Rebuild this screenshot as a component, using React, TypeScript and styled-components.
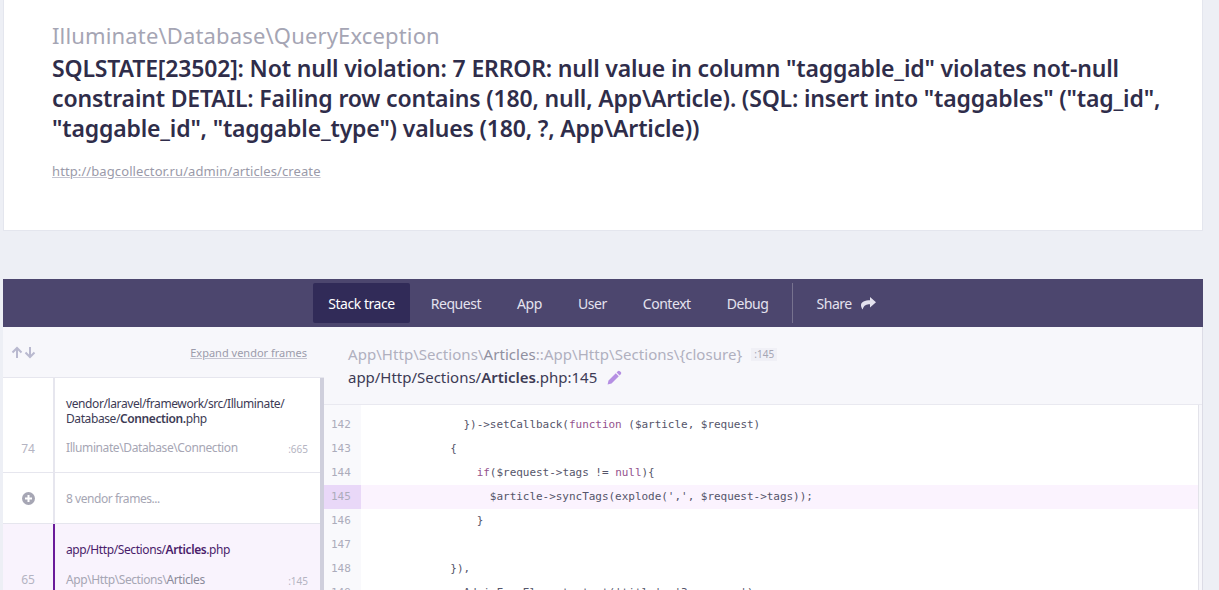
import React from "react";
import styled, { createGlobalStyle } from "styled-components";

const GlobalStyle = createGlobalStyle`
  html, body {
    margin: 0;
    height: 590px;
    overflow: hidden;
    background: #edeff5;
    font-family: "Noto Sans", "Open Sans", sans-serif;
  }
`;

const Page = styled.div`
  display: flex;
  flex-direction: column;
  gap: 48px;
  width: 1200px;
  margin-left: 3px;
`;

const ErrorCard = styled.section`
  height: 231px;
  box-sizing: border-box;
  background: #fff;
  border: 1px solid #e4e6ee;
  border-top: 0;
  padding: 21px 36px 0 48px;
`;

const ExceptionClass = styled.div`
  font-size: 22px;
  line-height: 28px;
  color: #a5a5b4;
  letter-spacing: 0.15px;
`;

const ExceptionMessage = styled.h1`
  margin: 4px 0 0;
  font-size: 23px;
  line-height: 30px;
  font-weight: 600;
  color: #2f2d4a;
  letter-spacing: -0.17px;
`;

const RequestUrl = styled.a`
  display: inline-block;
  margin-top: 19px;
  font-size: 13px;
  line-height: 18px;
  letter-spacing: 0.1px;
  color: #9a9aa9;
  text-decoration: underline;
  text-decoration-color: #c4c4d0;
`;

const TraceCard = styled.section`
  background: #fff;
  border-radius: 2px 2px 0 0;
`;

const TabBar = styled.nav`
  height: 48px;
  background: #4c466e;
  display: flex;
  justify-content: center;
  align-items: center;
  padding-left: 4px;
`;

const Tab = styled.span<{ $active?: boolean }>`
  height: 40px;
  display: flex;
  align-items: center;
  gap: 9px;
  padding: 0 15px;
  margin-right: 6px;
  border-radius: 2px;
  font-size: 14px;
  letter-spacing: -0.45px;
  color: ${(p) => (p.$active ? "#fff" : "#e4e2ee")};
  background: ${(p) => (p.$active ? "#312b58" : "transparent")};
`;

const TabDivider = styled.span`
  width: 1px;
  height: 40px;
  background: #77728f;
  margin: 0 8px 0 3px;
`;

const Columns = styled.div`
  display: grid;
  grid-template-columns: 321px 1fr;
`;

const Sidebar = styled.aside`
  position: relative;
  background: #fff;
`;

const SidebarHead = styled.div`
  height: 51px;
  box-sizing: border-box;
  background: #f7f7fb;
  border-bottom: 1px solid #e6e6ee;
  display: flex;
  align-items: center;
  justify-content: space-between;
  padding: 0 17px 0 8px;
`;

const ArrowGroup = styled.div`
  display: flex;
  gap: 1px;
  color: #b9b9cf;
`;

const ExpandLink = styled.span`
  font-size: 11px;
  color: #9c9cab;
  text-decoration: underline;
  text-decoration-color: #c4c4d0;
`;

const Scrollbar = styled.div`
  position: absolute;
  top: 51px;
  right: 0;
  bottom: 0;
  width: 4px;
  background: #cfcfdc;
`;

const Frame = styled.div<{ $active?: boolean }>`
  display: grid;
  grid-template-columns: 50px 1fr;
  border-bottom: 1px solid #e6e6ee;
  background: ${(p) => (p.$active ? "#f9f3fd" : "#fff")};
`;

const Gutter = styled.div`
  display: flex;
  align-items: flex-end;
  justify-content: center;
  font-size: 12px;
  color: #b4b4c2;
`;

const GutterIcon = styled(Gutter)`
  align-items: center;
  color: #a6a6b4;
`;

const FrameNumber = styled.span<{ $bottom: number }>`
  padding-bottom: ${(p) => p.$bottom}px;
`;

const FrameBody = styled.div<{ $active?: boolean; $pad: string }>`
  border-left: 2px solid ${(p) => (p.$active ? "#6a1b9a" : "#e6e6ee")};
  padding: ${(p) => p.$pad};
`;

const FramePath = styled.div<{ $active?: boolean }>`
  font-size: 12px;
  line-height: 15px;
  letter-spacing: -0.4px;
  color: ${(p) => (p.$active ? "#4a1d6b" : "#3d3b55")};

  strong {
    font-weight: 600;
  }
`;

const ClassRow = styled.div<{ $gap: number }>`
  display: flex;
  justify-content: space-between;
  align-items: center;
  margin-top: ${(p) => p.$gap}px;
`;

const FrameClass = styled.div`
  font-size: 12px;
  line-height: 16px;
  letter-spacing: -0.4px;
  color: #a6a6b4;

  strong {
    font-weight: 400;
    color: #8b8b9b;
  }
`;

const FrameLine = styled.span`
  padding-top: 2px;
  font-size: 10px;
  color: #b4b4c2;
`;

const VendorLabel = styled.div`
  font-size: 12px;
  line-height: 16px;
  letter-spacing: -0.45px;
  color: #a6a6b4;
`;

const Main = styled.div`
  background: #f7f7fb;
  border-left: 1px solid #e6e6ee;
  border-right: 1px solid #dcdce6;
  margin-left: -1px;
  min-width: 0;
`;

const MainHead = styled.div`
  height: 78px;
  box-sizing: border-box;
  padding: 17px 24px 0;
  border-bottom: 1px solid #e9e9f0;
`;

const MethodLine = styled.div`
  display: flex;
  align-items: center;
  gap: 9px;
  font-size: 15px;
  line-height: 20px;
  letter-spacing: 0.05px;
  color: #b0b0bf;

  strong {
    font-weight: 400;
    color: #9090a0;
  }
`;

const LineBadge = styled.span`
  font-size: 10px;
  line-height: 13px;
  padding: 0 3px;
  background: #f0f0f6;
  color: #a6a6b4;
  letter-spacing: 0;
`;

const FileLine = styled.div`
  display: flex;
  align-items: center;
  gap: 10px;
  margin-top: 3px;
  font-size: 15px;
  line-height: 20px;
  letter-spacing: -0.02px;
  color: #3d3b55;

  strong {
    font-weight: 600;
  }
`;

const Code = styled.div`
  display: grid;
  grid-template-columns: 37px 1fr;
  margin-right: 3px;
  padding-top: 8px;
  background: linear-gradient(to right, #f9f9fc 37px, #fff 37px);
  border-right: 1px solid #e3e3ea;
  font-family: "DejaVu Sans Mono", "Liberation Mono", monospace;
  font-size: 11px;
`;

const LineNo = styled.div<{ $active?: boolean }>`
  height: 24px;
  line-height: 24px;
  padding-left: 7px;
  font-size: 11px;
  color: #acacbb;
  background: ${(p) => (p.$active ? "#e9d8f8" : "#f9f9fc")};
`;

const LineText = styled.div<{ $active?: boolean }>`
  height: 24px;
  line-height: 24px;
  padding-left: 3.6px;
  white-space: pre;
  letter-spacing: -0.03px;
  color: #55556a;
  background: ${(p) => (p.$active ? "#fbf3fe" : "#fff")};
  overflow: hidden;
`;

const Keyword = styled.span`
  color: #93528d;
`;

const ArrowUp = () => (
  <svg width="12" height="13" viewBox="0 0 12 13" fill="none" stroke="currentColor" strokeWidth="2">
    <path d="M6 12V2M1.5 6.5 6 2l4.5 4.5" />
  </svg>
);

const ArrowDown = () => (
  <svg width="12" height="13" viewBox="0 0 12 13" fill="none" stroke="currentColor" strokeWidth="2">
    <path d="M6 1v10M1.5 6.5 6 11l4.5-4.5" />
  </svg>
);

const PlusCircle = () => (
  <svg width="13" height="13" viewBox="0 0 13 13">
    <circle cx="6.5" cy="6.5" r="6.5" fill="currentColor" />
    <path d="M6.5 3v7M3 6.5h7" stroke="#fff" strokeWidth="2" />
  </svg>
);

const ShareIcon = () => (
  <svg width="15" height="13" viewBox="0 0 15 13" fill="currentColor">
    <path d="M9 0l6 5.2L9 10.4V7.2C5.5 7.2 3 8 1.6 12.4.6 11 0 9.6 0 8.2 0 4.8 4 3.2 9 3.2z" />
  </svg>
);

const Pencil = () => (
  <svg width="15" height="15" viewBox="0 0 15 15" fill="#b58fe3">
    <path d="M10.8 1.2a1.5 1.5 0 0 1 2.1 0l.9.9a1.5 1.5 0 0 1 0 2.1l-1.2 1.2-3-3zM8.8 3.2l3 3-7.3 7.3L.6 14.4l.9-3.9z" />
  </svg>
);

const tabs = ["Request", "App", "User", "Context", "Debug"];

const codeLines: { no: number; text: React.ReactNode; active?: boolean }[] = [
  { no: 142, text: <>{"               })->setCallback("}<Keyword>function</Keyword>{" ($article, $request)"}</> },
  { no: 143, text: "             {" },
  { no: 144, text: <>{"                 "}<Keyword>if</Keyword>{"($request->tags != "}<Keyword>null</Keyword>{"){"}</> },
  { no: 145, text: "                   $article->syncTags(explode(',', $request->tags));", active: true },
  { no: 146, text: "                 }" },
  { no: 147, text: "" },
  { no: 148, text: "             })," },
  { no: 149, text: "               AdminFormElement::text('title', 'Заголовок')" },
];

const App = () => {
  return (
    <Page>
      <GlobalStyle />
      <ErrorCard>
        <ExceptionClass>Illuminate\Database\QueryException</ExceptionClass>
        <ExceptionMessage>
          SQLSTATE[23502]: Not null violation: 7 ERROR: null value in column "taggable_id" violates not-null constraint
          DETAIL: Failing row contains (180, null, App\Article). (SQL: insert into "taggables" ("tag_id", "taggable_id",
          "taggable_type") values (180, ?, App\Article))
        </ExceptionMessage>
        <RequestUrl>http://bagcollector.ru/admin/articles/create</RequestUrl>
      </ErrorCard>
      <TraceCard>
        <TabBar>
          <Tab $active>Stack trace</Tab>
          {tabs.map((tab) => (
            <Tab key={tab}>{tab}</Tab>
          ))}
          <TabDivider />
          <Tab>
            Share <ShareIcon />
          </Tab>
        </TabBar>
        <Columns>
          <Sidebar>
            <SidebarHead>
              <ArrowGroup>
                <ArrowUp />
                <ArrowDown />
              </ArrowGroup>
              <ExpandLink>Expand vendor frames</ExpandLink>
            </SidebarHead>
            <Frame>
              <Gutter>
                <FrameNumber $bottom={15}>74</FrameNumber>
              </Gutter>
              <FrameBody $pad="18px 16px 16px 11px">
                <FramePath>
                  vendor/laravel/framework/src/Illuminate/ Database/<strong>Connection.</strong>php
                </FramePath>
                <ClassRow $gap={14}>
                  <FrameClass>Illuminate\Database\Connection</FrameClass>
                  <FrameLine>:665</FrameLine>
                </ClassRow>
              </FrameBody>
            </Frame>
            <Frame>
              <GutterIcon>
                <PlusCircle />
              </GutterIcon>
              <FrameBody $pad="18px 16px 16px 11px">
                <VendorLabel>8 vendor frames...</VendorLabel>
              </FrameBody>
            </Frame>
            <Frame $active>
              <Gutter>
                <FrameNumber $bottom={20}>65</FrameNumber>
              </Gutter>
              <FrameBody $active $pad="18px 16px 20px 11px">
                <FramePath $active>
                  app/Http/Sections/<strong>Articles</strong>.php
                </FramePath>
                <ClassRow $gap={15}>
                  <FrameClass>
                    App\Http\Sections\<strong>Articles</strong>
                  </FrameClass>
                  <FrameLine>:145</FrameLine>
                </ClassRow>
              </FrameBody>
            </Frame>
            <Scrollbar />
          </Sidebar>
          <Main>
            <MainHead>
              <MethodLine>
                <span>
                  App\Http\Sections\<strong>Articles</strong>::App\Http\Sections\{"{closure}"}
                </span>
                <LineBadge>:145</LineBadge>
              </MethodLine>
              <FileLine>
                <span>
                  app/Http/Sections/<strong>Articles</strong>.php:145
                </span>
                <Pencil />
              </FileLine>
            </MainHead>
            <Code>
              {codeLines.map((line) => (
                <React.Fragment key={line.no}>
                  <LineNo $active={line.active}>{line.no}</LineNo>
                  <LineText $active={line.active}>{line.text}</LineText>
                </React.Fragment>
              ))}
            </Code>
          </Main>
        </Columns>
      </TraceCard>
    </Page>
  );
};

export default App;
